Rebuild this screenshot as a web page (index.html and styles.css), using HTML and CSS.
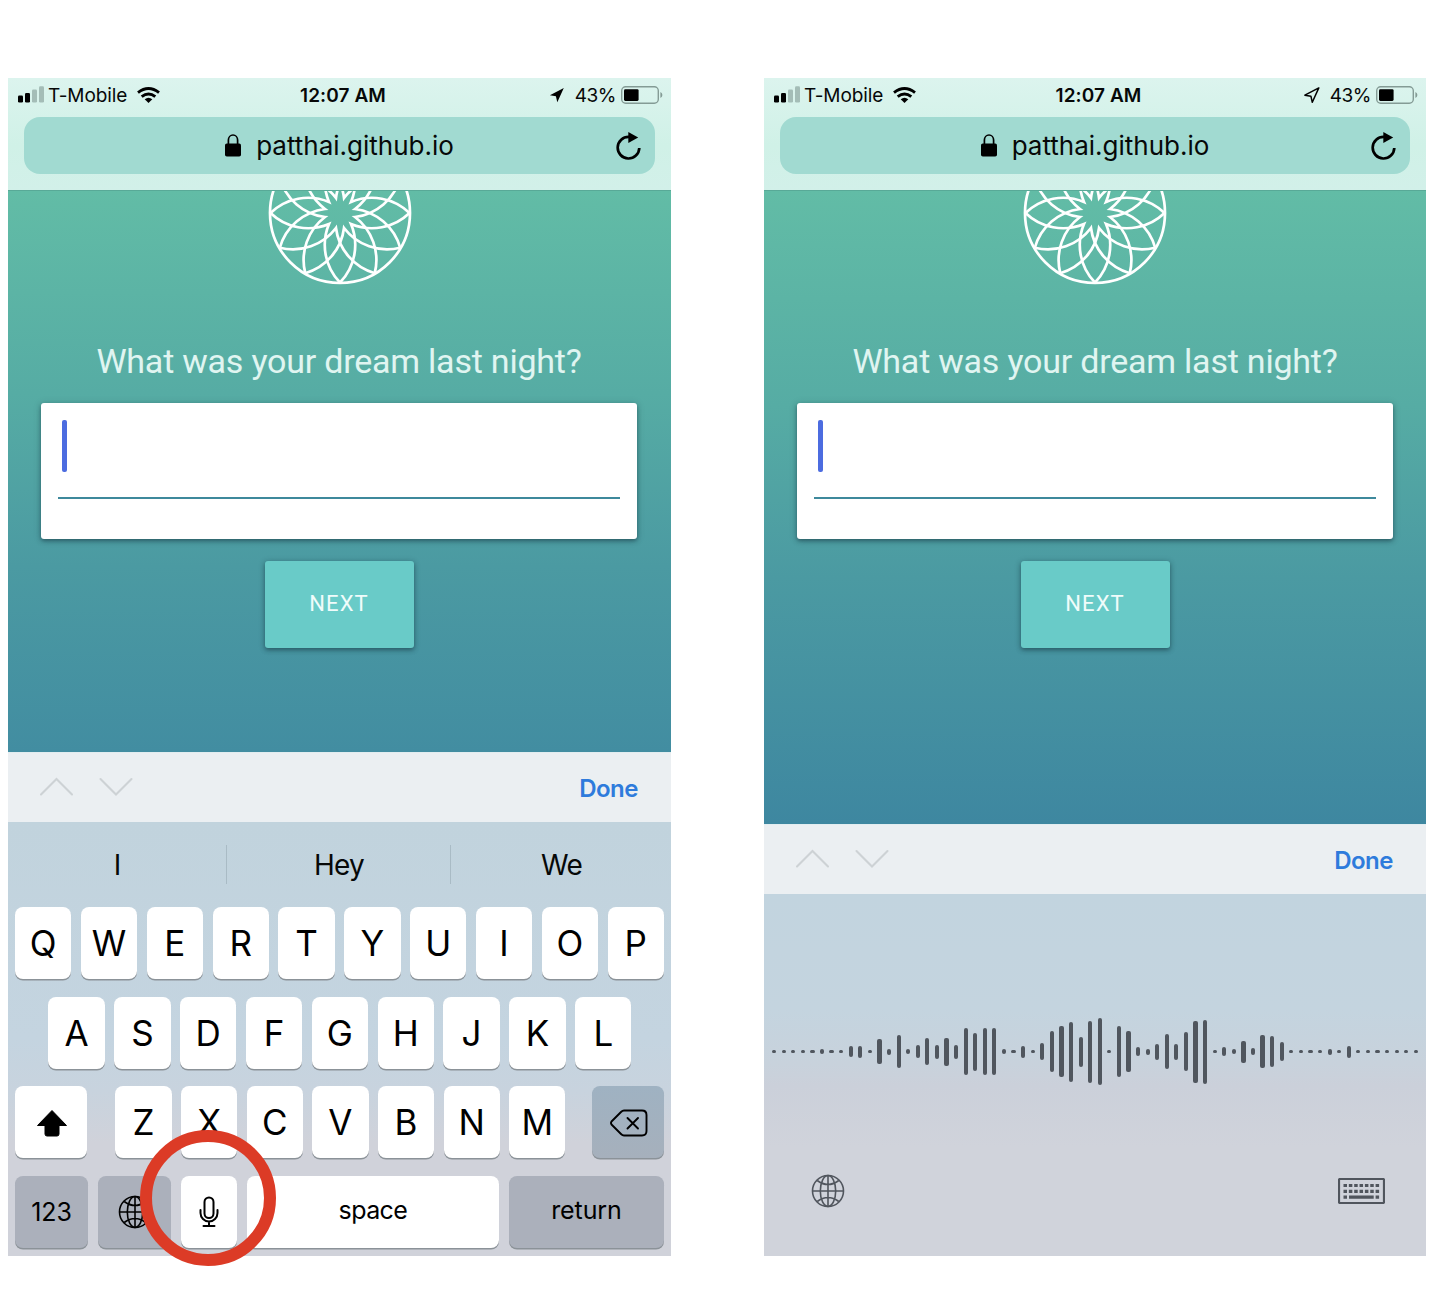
FILE: index.html
```html
<!DOCTYPE html>
<html lang="en">
<head>
<meta charset="utf-8">
<title>Dream journal</title>
<link rel="stylesheet" href="styles.css">
</head>
<body>
<svg class="sprite" width="0" height="0">
  <symbol id="signal" viewBox="0 0 26 17">
    <rect x="0" y="9.5" width="5" height="7" rx="1.3"/>
    <rect x="7" y="7" width="5" height="9.5" rx="1.3"/>
    <rect x="14" y="3.5" width="5" height="13" rx="1.3" fill="#a4bdb7"/>
    <rect x="21" y="0.3" width="5" height="16.2" rx="1.3" fill="#a4bdb7"/>
  </symbol>
  <symbol id="wifi" viewBox="0 0 23 16">
    <g fill="none" stroke="#000" stroke-width="2.9">
      <path d="M1 5.6 Q11.5 -2.6 22 5.6"/>
      <path d="M4.7 9.7 Q11.5 4.2 18.3 9.7"/>
    </g>
    <path d="M7.7 12.3 Q11.5 9 15.3 12.3 L11.5 16Z"/>
  </symbol>
  <symbol id="arrow" viewBox="0 0 16 16">
    <path d="M14.8 0.9 L0.9 8.2 L6.9 9.2 L8.3 15.3Z" stroke-linejoin="round"/>
  </symbol>
  <symbol id="battery" viewBox="0 0 42 18">
    <rect x="0.7" y="0.7" width="36.6" height="16.6" rx="4" fill="none" stroke="#849b95" stroke-width="1.4"/>
    <rect x="3" y="3.2" width="14.6" height="11.7" rx="1.3"/>
    <path d="M39.4 6 q2 0.8 2 3 t-2 3z" fill="#849b95"/>
  </symbol>
  <symbol id="lock" viewBox="0 0 16 23">
    <rect x="0" y="9.5" width="16" height="13" rx="1.8"/>
    <path d="M3.4 10.5 V6 a4.6 5 0 0 1 9.2 0 V10.5" fill="none" stroke="#000" stroke-width="1.7"/>
  </symbol>
  <symbol id="reload" viewBox="0 0 25 28">
    <path d="M13 4.9 A10.8 10.8 0 1 0 23.3 16" fill="none" stroke="#000" stroke-width="2.7"/>
    <path d="M12.3 0 L22.2 5.5 L12.3 11Z"/>
  </symbol>
  <symbol id="petal" overflow="visible">
    <path d="M0 69.5 A54 54 0 0 1 -11 11 A54 54 0 0 1 -69.5 0"/>
  </symbol>
  <symbol id="flower" viewBox="-72 -72 144 144">
    <g fill="none" stroke="#fff" stroke-width="2.7" stroke-miterlimit="10">
      <circle r="70"/>
      <use href="#petal"/>
      <use href="#petal" transform="rotate(30)"/>
      <use href="#petal" transform="rotate(60)"/>
      <use href="#petal" transform="rotate(90)"/>
      <use href="#petal" transform="rotate(120)"/>
      <use href="#petal" transform="rotate(150)"/>
      <use href="#petal" transform="rotate(180)"/>
      <use href="#petal" transform="rotate(210)"/>
      <use href="#petal" transform="rotate(240)"/>
      <use href="#petal" transform="rotate(270)"/>
      <use href="#petal" transform="rotate(300)"/>
      <use href="#petal" transform="rotate(330)"/>
    </g>
  </symbol>
  <symbol id="chevrons" viewBox="0 0 94 20">
    <path d="M2 17.5 L17.5 2 L33 17.5 M61.5 2 L77 17.5 L92.5 2" fill="none" stroke="#cdd2d5" stroke-width="2.1" stroke-linecap="round"/>
  </symbol>
  <symbol id="globe" viewBox="-17 -17 34 34">
    <g fill="none" stroke="currentColor" stroke-width="1.6">
      <circle r="15.5"/>
      <ellipse rx="7.7" ry="15.5"/>
      <path d="M0 -15.5V15.5 M-15.5 0H15.5 M-10.8 -10.5Q0 -2.5 10.8 -10.5 M-10.8 10.5Q0 2.5 10.8 10.5"/>
    </g>
  </symbol>
</svg>

<main class="screens">
  <section class="phone phone-typing">
    <header class="browser">
      <div class="status">
        <div class="status-left">
          <svg class="i-signal"><use href="#signal"/></svg>
          <span class="carrier">T-Mobile</span>
          <svg class="i-wifi"><use href="#wifi"/></svg>
        </div>
        <span class="clock">12:07 AM</span>
        <div class="status-right">
          <svg class="i-arrow"><use href="#arrow"/></svg>
          <span class="percent">43%</span>
          <svg class="i-battery"><use href="#battery"/></svg>
        </div>
      </div>
      <div class="address">
        <div class="site">
          <svg class="i-lock"><use href="#lock"/></svg>
          <span class="url">patthai.github.io</span>
        </div>
        <svg class="i-reload"><use href="#reload"/></svg>
      </div>
    </header>
    <div class="page">
      <svg class="flower"><use href="#flower"/></svg>
      <h1 class="question">What was your dream last night?</h1>
      <div class="card"><div class="field"><span class="caret"></span></div></div>
      <button class="next">NEXT</button>
    </div>
    <div class="accessory">
      <svg class="i-chevrons"><use href="#chevrons"/></svg>
      <span class="done">Done</span>
    </div>
    <div class="keyboard">
      <div class="suggestions"><span>I</span><span>Hey</span><span>We</span></div>
      <div class="row"><b>Q</b><b>W</b><b>E</b><b>R</b><b>T</b><b>Y</b><b>U</b><b>I</b><b>O</b><b>P</b></div>
      <div class="row row-home"><b>A</b><b>S</b><b>D</b><b>F</b><b>G</b><b>H</b><b>J</b><b>K</b><b>L</b></div>
      <div class="row row-shift">
        <b class="shift"><svg width="32" height="28" viewBox="0 0 32 28"><path d="M16 1.5 L30.5 16.5 H23 V25 Q23 27 21 27 H11 Q9 27 9 25 V16.5 H1.5Z" stroke="#000" stroke-linejoin="round"/></svg></b>
        <b>Z</b><b>X</b><b>C</b><b>V</b><b>B</b><b>N</b><b>M</b>
        <b class="delete dark"><svg width="38" height="28" viewBox="0 0 38 28"><g fill="none" stroke="#000" stroke-width="1.9" stroke-linejoin="round" stroke-linecap="round"><path d="M14 1.5 H32 Q36.5 1.5 36.5 6 V22 Q36.5 26.5 32 26.5 H14 Q12.5 26.5 11 25 L1.5 15.5 Q0.5 14 1.5 12.5 L11 3 Q12.5 1.5 14 1.5Z"/><path d="M17.5 9 L28 19.5 M28 9 L17.5 19.5"/></g></svg></b>
      </div>
      <div class="row row-bottom">
        <b class="dark small wide">123</b>
        <b class="dark wide"><svg class="i-globe"><use href="#globe"/></svg></b>
        <b class="mic"><svg width="20" height="32" viewBox="0 0 20 32"><g fill="none" stroke="#000" stroke-width="2"><rect x="5.5" y="1.5" width="9" height="20.5" rx="4.5"/><path d="M1.5 14 V17 A8.5 8.5 0 0 0 18.5 17 V14 M10 25.5 V30 M4.5 30 H15.5" stroke-linecap="round"/></g></svg></b>
        <b class="small space">space</b>
        <b class="dark small return">return</b>
      </div>
      <div class="highlight"></div>
    </div>
  </section>

  <section class="phone phone-dictation">
    <header class="browser">
      <div class="status">
        <div class="status-left">
          <svg class="i-signal"><use href="#signal"/></svg>
          <span class="carrier">T-Mobile</span>
          <svg class="i-wifi"><use href="#wifi"/></svg>
        </div>
        <span class="clock">12:07 AM</span>
        <div class="status-right">
          <svg class="i-arrow outline"><use href="#arrow"/></svg>
          <span class="percent">43%</span>
          <svg class="i-battery"><use href="#battery"/></svg>
        </div>
      </div>
      <div class="address">
        <div class="site">
          <svg class="i-lock"><use href="#lock"/></svg>
          <span class="url">patthai.github.io</span>
        </div>
        <svg class="i-reload"><use href="#reload"/></svg>
      </div>
    </header>
    <div class="page">
      <svg class="flower"><use href="#flower"/></svg>
      <h1 class="question">What was your dream last night?</h1>
      <div class="card"><div class="field"><span class="caret"></span></div></div>
      <button class="next">NEXT</button>
    </div>
    <div class="accessory">
      <svg class="i-chevrons"><use href="#chevrons"/></svg>
      <span class="done">Done</span>
    </div>
    <div class="dictation">
      <div class="wave" id="wave"></div>
      <div class="tools">
        <svg class="i-globe"><use href="#globe"/></svg>
        <svg width="47" height="26" viewBox="0 0 47 26">
          <rect x="1" y="1" width="45" height="24" rx="1" fill="none" stroke="#50555d" stroke-width="2.2"/>
          <g stroke="#50555d" stroke-width="3.2" fill="none">
            <path d="M5.5 7.5 H42" stroke-dasharray="3.5 1.85"/>
            <path d="M5.5 13.3 H42" stroke-dasharray="3.5 1.85"/>
            <path d="M5.5 19.2 H9 M11 19.2 H35.7 M37.6 19.2 H41.1"/>
          </g>
        </svg>
      </div>
    </div>
  </section>
</main>
<script src="wave.js"></script>
</body>
</html>
```
FILE: wave.js
```js
// Sound level samples, drawn as one bar each.
const levels = [
  2.5, 2.5, 2.5, 2.5, 2.5, 4.5, 2.5, 2.5, 11, 12, 2.5, 25, 6, 33, 4.5, 12.5, 27,
  14, 28, 14, 47, 38, 47, 47, 4.5, 2.5, 12, 2.5, 17, 41, 51, 60, 30, 62, 67,
  2.5, 51, 41, 9, 6, 16, 35, 16, 39, 62, 64, 2.5, 9, 4.5, 22, 7, 33, 31, 19,
  2.5, 2.5, 2.5, 2.5, 6, 2.5, 12, 2.5, 2.5, 2.5, 2.5, 2.5, 2.5, 2.5
];
const wave = document.getElementById("wave");
for (const level of levels) {
  const bar = document.createElement("i");
  bar.style.height = level + "px";
  wave.append(bar);
}
```
FILE: styles.css
```css
* { box-sizing: border-box; }
body {
  margin: 0;
  background: #fff;
  color: #060808;
  font-family: Inter, "Liberation Sans", sans-serif;
}
.sprite { position: absolute; }
svg { display: block; flex: none; }
.screens {
  display: flex;
  gap: 93px;
  padding: 78px 0 0 8px;
  height: 1298px;
}
.phone {
  display: flex;
  flex-direction: column;
  width: 663px;
  height: 1178px;
  flex: none;
}
.phone-dictation { width: 662px; }

.browser {
  height: 112px;
  flex: none;
  padding: 0 16px;
  background: linear-gradient(#dcf4ee, #d0f1e7 60%, #d2f0e9);
}
.status {
  display: grid;
  grid-template-columns: 1fr auto 1fr;
  align-items: center;
  height: 39px;
  padding-bottom: 6px;
  margin: 0 -8px 0 -7px;
  font-size: 19px;
  line-height: 24px;
}
.status span { padding-top: 2px; }
.status-left, .status-right { display: flex; align-items: center; }
.status-right { justify-content: flex-end; }
.i-signal { width: 26px; height: 17px; margin: 0 4.5px 0 0.5px; }
.carrier { letter-spacing: -0.12px; }
.i-wifi { width: 23px; height: 16px; margin-left: 10px; }
.clock { font-weight: 600; margin-left: 6px; letter-spacing: 0.1px; }
.i-arrow { width: 16px; height: 16px; margin-right: 10px; }
.outline { fill: none; stroke: #000; stroke-width: 1.5; }
.percent { letter-spacing: -0.5px; }
.i-battery { width: 42px; height: 18px; margin-left: 5px; }
.address {
  display: grid;
  grid-template-columns: 1fr auto 1fr;
  align-items: center;
  height: 57px;
  padding: 0 14px;
  border-radius: 16px;
  background: #a1dad1;
}
.site { grid-column: 2; display: flex; align-items: center; }
.i-lock { width: 16px; height: 23px; margin-right: 15px; }
.url { font-size: 26px; line-height: 32px; }
.i-reload { width: 25px; height: 28px; justify-self: end; }

.page {
  flex: 1;
  min-height: 0;
  overflow: hidden;
  display: flex;
  flex-direction: column;
  align-items: center;
  border-top: 1px solid #58a997;
  background: linear-gradient(#62bca6, #56aca4 36%, #4b9aa2 67%, #428da1);
  font-family: Roboto, sans-serif;
}
.phone-typing .page { padding-right: 1px; }
.phone-dictation .page {
  background: linear-gradient(#62bca6, #56aca4 34%, #4b9aa2 61%, #3e87a0);
}
.flower { width: 144px; height: 144px; margin-top: -50.5px; flex: none; }
.phone-typing .flower { margin-left: 1px; }
.question {
  margin: 56.5px 0 0;
  height: 40px;
  font-size: 34px;
  line-height: 40px;
  font-weight: 400;
  letter-spacing: -0.22px;
  color: #e0f5f1;
  white-space: nowrap;
}
.card {
  width: 596px;
  height: 136px;
  margin-top: 22px;
  padding: 17px 17px 0;
  flex: none;
  border-radius: 3px;
  background: #fff;
  box-shadow: 0 2px 4px rgba(20, 50, 60, .55), 0 1px 8px rgba(20, 50, 60, .15);
}
.field { height: 79px; padding-left: 4px; border-bottom: 2px solid #3e899c; }
.caret { display: block; width: 5px; height: 52px; border-radius: 2px; background: #4c6ce0; }
.next {
  width: 149px;
  height: 87px;
  margin-top: 22px;
  padding: 0 0 1px;
  flex: none;
  border: 0;
  border-radius: 3px;
  background: #69cbc8;
  box-shadow: 0 2px 4px rgba(20, 50, 60, .5), 0 1px 7px rgba(20, 50, 60, .2);
  color: #f0fcfb;
  font: 400 22px/26px Roboto, sans-serif;
  letter-spacing: 1.1px;
}

.accessory {
  display: flex;
  align-items: center;
  justify-content: space-between;
  height: 70px;
  flex: none;
  padding: 0 33px 0 31px;
  border-top: 1px solid #e2edf0;
  background: #ebeff2;
}
.i-chevrons { width: 94px; height: 20px; margin-top: -2px; }
.done { margin-top: 2px; font-size: 24px; line-height: 30px; font-weight: 600; letter-spacing: -0.5px; color: #2e7bdc; }

.keyboard {
  position: relative;
  height: 434px;
  flex: none;
  padding: 0 7px;
  background: linear-gradient(#c1d3dd, #c4d4e0 50%, #c8d3de 62%, #d0d2da 74%, #d0d2da);
}
.suggestions {
  display: grid;
  grid-template-columns: 218px 224px 1fr;
  align-items: center;
  height: 85px;
  margin: 0 -7px;
  font-size: 28px;
  letter-spacing: -0.8px;
  text-align: center;
}
.suggestions span { height: 39px; line-height: 41px; }
.suggestions span + span { padding-left: 1px; border-left: 1px solid #a9bbc5; }
.row { display: flex; justify-content: space-between; height: 72px; margin-bottom: 17.6px; }
.row b {
  display: flex;
  align-items: center;
  justify-content: center;
  width: 56.3px;
  border-radius: 8px;
  background: #fff;
  box-shadow: 0 1.5px 0.5px #8b9298;
  color: #000;
  font-size: 35px;
  font-weight: 400;
}
.row-home { padding: 0 32.5px 0 33.4px; }
.row-shift { justify-content: flex-start; gap: 9.35px; }
.row .shift { width: 72px; margin-right: 19px; }
.row .delete { width: 72px; margin-left: auto; background: linear-gradient(#9fb2c2, #a6b0bc); }
.row .shift svg, .row .delete svg { margin: 2px 0 0 1px; }
.row-bottom { gap: 9.5px; }
.row .dark { background-color: #abb0bb; }
.row .small { font-size: 25px; letter-spacing: -0.1px; }
.row .wide { width: 73px; }
.row .space { width: 252.5px; padding-bottom: 4px; letter-spacing: -0.6px; }
.row .return { width: 155px; padding-bottom: 4px; }
.mic svg { margin: 1px 0 0 1px; }
.i-globe { width: 34px; height: 34px; color: #50555d; }
.dark .i-globe { color: #000; margin-left: 1px; }
.highlight {
  position: absolute;
  left: 131.5px;
  top: 308px;
  width: 136px;
  height: 136px;
  border: 12px solid #dc3b26;
  border-radius: 50%;
}

.dictation {
  height: 362px;
  flex: none;
  background: linear-gradient(#c2d4df, #c4d4df 32%, #c8d2dc 47%, #cbd0da 53%, #d0d3db 70%, #d0d3db);
}
.wave {
  display: flex;
  align-items: center;
  justify-content: space-between;
  height: 315px;
  padding: 0 8px;
}
.wave i { width: 4.2px; border-radius: 2px; background: #50565e; }
.tools {
  display: flex;
  align-items: center;
  justify-content: space-between;
  margin-top: -35px;
  padding: 0 41px 0 47px;
}
```
